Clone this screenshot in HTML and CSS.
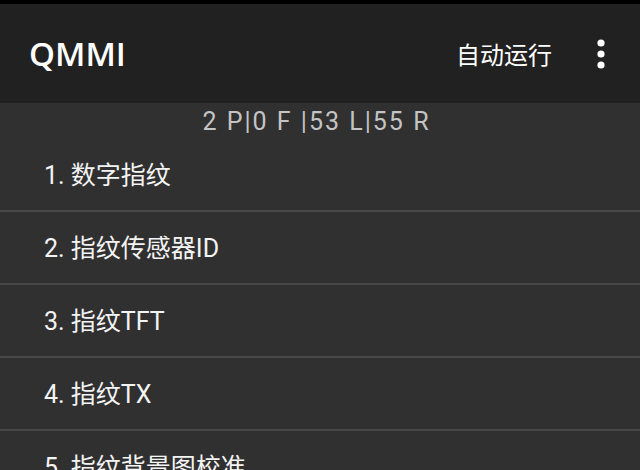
FILE: index.html
```html
<!DOCTYPE html>
<html lang="zh">
<head>
<meta charset="utf-8">
<link rel="stylesheet" href="styles.css">
</head>
<body>
<div class="statusbar"></div>
<header class="toolbar">
  <div class="title">QMMI</div>
  <div class="action">自动运行</div>
  <div class="more">
    <svg width="8" height="30" viewBox="0 0 8 30"><circle cx="4" cy="4" r="3.6" fill="#fff"/><circle cx="4" cy="15" r="3.6" fill="#fff"/><circle cx="4" cy="26" r="3.6" fill="#fff"/></svg>
  </div>
</header>
<main class="content">
  <div class="summary">2 P|0 F |53 L|55 R</div>
  <ul class="list">
    <li class="row">1. 数字指纹</li>
    <li class="row">2. 指纹传感器ID</li>
    <li class="row">3. 指纹TFT</li>
    <li class="row">4. 指纹TX</li>
    <li class="row">5. 指纹背景图校准</li>
  </ul>
</main>
</body>
</html>
```
FILE: styles.css
```css
html, body {
  margin: 0;
  padding: 0;
  background: #303030;
  height: 470px;
  overflow: hidden;
}
body {
  font-family: Roboto, "Noto Sans CJK SC", sans-serif;
  color: #f2f2f2;
}
.statusbar {
  height: 4px;
  background: #000;
}
.toolbar {
  height: 99px;
  background: #212121;
  display: flex;
  align-items: center;
  padding-left: 29px;
  box-sizing: border-box;
}
.title {
  font-family: "Open Sans", "Noto Sans", sans-serif;
  font-size: 33px;
  font-weight: 600;
  color: #fff;
  flex: 1;
}
.action {
  font-family: "Noto Sans CJK SC", sans-serif;
  font-size: 24px;
  color: #fff;
  margin-right: 45px;
}
.more {
  width: 8px;
  height: 30px;
  margin-right: 35px;
  display: flex;
}
.content {
  background: #303030;
}
.summary {
  height: 36px;
  display: flex;
  align-items: center;
  justify-content: center;
  font-size: 25px;
  color: #c4c4c4;
  letter-spacing: 2px;
  white-space: pre;
  padding-right: 7px;
}
.list {
  list-style: none;
  margin: 0;
  padding: 0;
}
.row {
  height: 68px;
  border-bottom: 2px solid #474747;
  display: flex;
  align-items: center;
  padding-left: 44px;
  padding-bottom: 3px;
  font-size: 25px;
  color: #f4f4f4;
  font-family: Roboto, "Noto Sans CJK SC", sans-serif;
}
```
